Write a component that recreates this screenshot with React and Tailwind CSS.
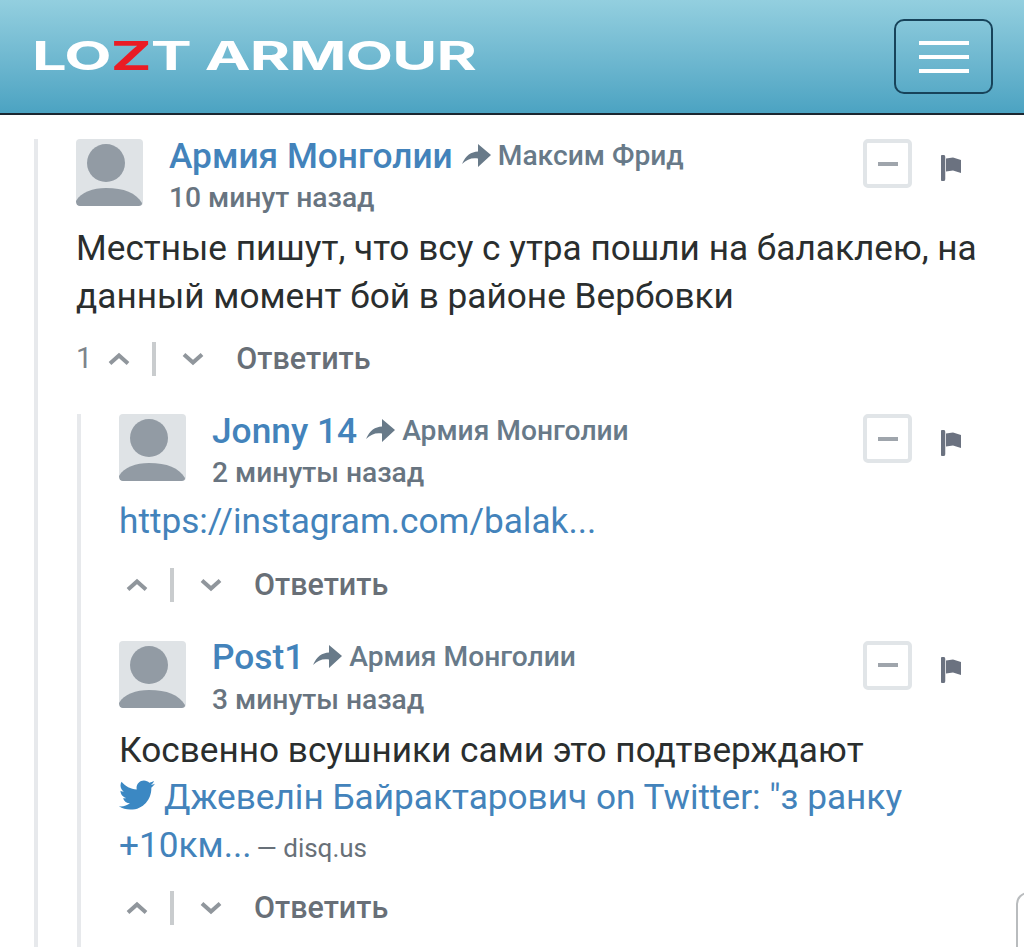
import { FaTwitter } from 'react-icons/fa';

function Avatar() {
  return (
    <div className="h-[67px] w-[67px] shrink-0 overflow-hidden rounded-[4px] bg-[#dfe3e6]">
      <svg viewBox="0 0 67 67" className="h-full w-full">
        <circle cx="30" cy="24" r="19" fill="#929ba4" />
        <path d="M0 62C5 53 17 49 30 49C48 49 60 54 66 64C66 66 65 67 63 67H4C1 67 0 65 0 62Z" fill="#929ba4" />
      </svg>
    </div>
  );
}

function Chevron({ up }) {
  return (
    <svg viewBox="0 0 24 14" className="h-[14px] w-[24px]">
      <path
        d={up ? 'M3 11.5L12 3.5L21 11.5' : 'M3 2.5L12 10.5L21 2.5'}
        fill="none"
        stroke="#90969c"
        strokeWidth="4"
      />
    </svg>
  );
}

function ReplyArrow() {
  return (
    <svg viewBox="0 0 29 27" className="ml-[9px] h-[27px] w-[29px] shrink-0">
      <path d="M0 21C4 12 9 9 16 8.5V1L29 12L16 24V15.5C10 14.5 5 16 0 21Z" fill="#687a89" />
    </svg>
  );
}

function Actions({ score }) {
  return (
    <div className="mt-[19px] flex h-10 items-center text-[#686f77]">
      {score && <span className="mr-[15px] text-[29px] font-normal text-[#7d848a]">{score}</span>}
      <div className={score ? '' : 'ml-[6px]'}>
        <Chevron up />
      </div>
      <div className="ml-[21px] mr-[25px] h-[34px] w-[4px] bg-[#c9ccce]" />
      <Chevron />
      <span className={`${score ? 'ml-[31px]' : 'ml-[31px]'} text-[30.5px] font-medium`}>Ответить</span>
    </div>
  );
}

function Comment({ name, to, time, bodyGap, children, score }) {
  return (
    <div>
      <div className="flex items-start">
        <Avatar />
        <div className="ml-[26px] min-w-0 flex-1">
          <div className="flex h-[34px] items-center whitespace-nowrap">
            <span className="text-[35.3px] font-medium text-[#4383bb]">{name}</span>
            <ReplyArrow />
            <span className="ml-[7px] text-[28.2px] font-medium text-[#687a89]">{to}</span>
          </div>
          <div className="mt-[9px] text-[28.2px] font-medium leading-[32px] text-[#687480]">{time}</div>
        </div>
        <div className="flex w-[149px] shrink-0 items-start">
          <div className="flex h-[49px] w-[49px] items-center justify-center rounded-[5px] border-[4px] border-[#e1e5e8] bg-white">
            <div className="h-[4px] w-[20px] bg-[#9fa5ac]" />
          </div>
          <svg viewBox="0 0 21 26" className="ml-[29px] mt-[16px] h-[26px] w-[21px]">
            <path d="M2 2V24" stroke="#6b7280" strokeWidth="4.5" strokeLinecap="round" />
            <path d="M5 3.5L12 2.5L20 5V18L12 15.5L5 16.5Z" fill="#6b7280" />
          </svg>
        </div>
      </div>
      <div className={`${bodyGap} text-[35.2px] leading-[47.5px] text-[#2a2e2e]`}>{children}</div>
      <Actions score={score} />
    </div>
  );
}

export default function App() {
  return (
    <div className="relative h-[947px] w-[1024px] overflow-hidden bg-white font-['Roboto',sans-serif]">
      <header className="flex h-[115px] items-center justify-between border-b-2 border-[#1b2730] bg-gradient-to-b from-[#93cfdf] to-[#4ba3c2] pl-[32px] pr-[31px]">
        <div className="flex h-[28px] origin-left scale-x-[1.575] items-center font-['Inter',sans-serif] text-[39px] font-bold tracking-[-0.5px] text-white">
          <span>LO</span>
          <span className="text-[#ea1c24]">Z</span>
          <span>T ARMOUR</span>
        </div>
        <button className="flex h-[75px] w-[99px] flex-col items-center justify-center gap-[10px] rounded-[10px] border-2 border-[#17435a]">
          <span className="h-[4px] w-[50px] bg-white" />
          <span className="h-[4px] w-[50px] bg-white" />
          <span className="h-[4px] w-[50px] bg-white" />
        </button>
      </header>

      <div className="ml-[34px] mt-6 border-l-[4px] border-[#e7e9ec] pb-10 pl-[38px] pr-[12px]">
        <Comment name="Армия Монголии" to="Максим Фрид" time="10 минут назад" bodyGap="mt-[11px]" score="1">
          Местные пишут, что всу с утра пошли на балаклею, на данный момент бой в районе Вербовки
        </Comment>

        <div className="ml-[1px] mt-[35px] border-l-[4px] border-[#e7e9ec] pb-10 pl-[38px]">
          <Comment name="Jonny 14" to="Армия Монголии" time="2 минуты назад" bodyGap="mt-[9px]">
            <span className="text-[#4383bb]">https://instagram.com/balak...</span>
          </Comment>
          <div className="mt-[36px]">
            <Comment name="Post1" to="Армия Монголии" time="3 минуты назад" bodyGap="mt-[11px]">
              <div>Косвенно всушники сами это подтверждают</div>
              <div className="text-[#4383bb]">
                <FaTwitter className="relative -top-[5px] mr-[9px] inline h-[36px] w-[36px] text-[#3b88c3] align-middle" />
                <span>Джевелін Байрактарович on Twitter: "з ранку</span>
              </div>
              <div className="-mb-[3px] flex items-baseline text-[#4383bb]">
                <span>+10км...</span>
                <span className="ml-[5px] text-[26px] text-[#687078]">— disq.us</span>
              </div>
            </Comment>
          </div>
        </div>
      </div>

      <div className="absolute left-[1016px] top-[892px] h-[80px] w-[40px] rounded-[12px] border-2 border-[#b9bcbe]" />
    </div>
  );
}
